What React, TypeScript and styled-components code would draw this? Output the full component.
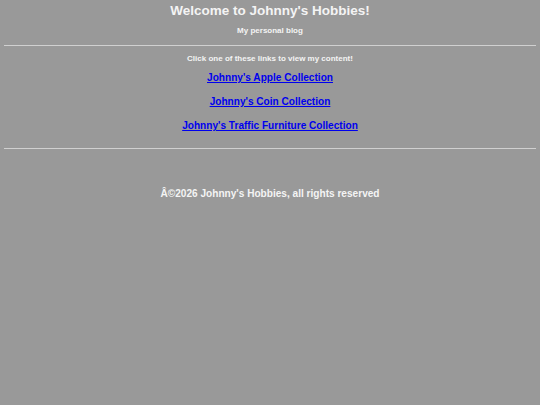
import React from "react";
import styled, { createGlobalStyle } from "styled-components";

const Global = createGlobalStyle`
  html, body {
    margin: 0;
    padding: 0;
    background: #999999;
  }
  body {
    font-family: "Liberation Sans", Arial, sans-serif;
    min-height: 405px;
  }
`;

const Page = styled.div`
  padding: 0 4px;
  display: flex;
  flex-direction: column;
  align-items: stretch;
  color: #f4f4f4;
  font-weight: bold;
  text-align: center;
`;

const Title = styled.h1`
  margin: 3px 0 0;
  font-size: 13.5px;
  line-height: 16px;
  font-weight: bold;
`;

const Small = styled.p<{ $top: number }>`
  margin: ${(p) => p.$top}px 0 0;
  font-size: 8px;
  line-height: 10px;
`;

const Rule = styled.hr<{ $top: number }>`
  margin: ${(p) => p.$top}px 0 0;
  border: none;
  border-top: 1px solid #d0d0d0;
  height: 0;
`;

const LinkList = styled.nav`
  display: flex;
  flex-direction: column;
  align-items: center;
  gap: 12px;
  margin-top: 8px;
`;

const Link = styled.a`
  color: #0000ee;
  font-size: 10.1px;
  line-height: 12px;
  text-decoration: underline;
`;

const Footer = styled.footer`
  margin-top: 39px;
  font-size: 10.1px;
  line-height: 12px;
`;

export default function App() {
  return (
    <>
      <Global />
      <Page>
        <Title>Welcome to Johnny's Hobbies!</Title>
        <Small $top={7}>My personal blog</Small>
        <Rule $top={9} />
        <Small $top={8}>Click one of these links to view my content!</Small>
        <LinkList>
          <Link href="#">Johnny's Apple Collection</Link>
          <Link href="#">Johnny's Coin Collection</Link>
          <Link href="#">Johnny's Traffic Furniture Collection</Link>
        </LinkList>
        <Rule $top={16} />
        <Footer>Â©2026 Johnny's Hobbies, all rights reserved</Footer>
      </Page>
    </>
  );
}
